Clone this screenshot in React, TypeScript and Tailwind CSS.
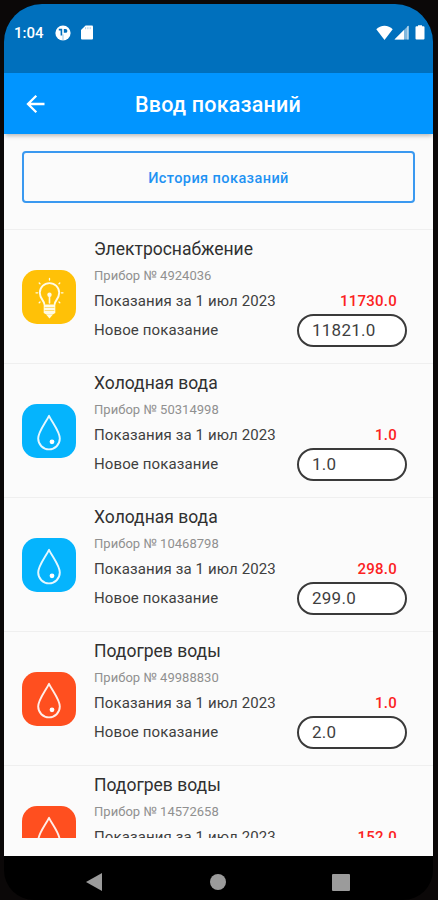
import { useState } from 'react';

type Meter = {
  id: number;
  kind: 'power' | 'cold' | 'hot';
  title: string;
  serial: string;
  previous: string;
  current: string;
};

const METERS: Meter[] = [
  { id: 1, kind: 'power', title: 'Электроснабжение', serial: '4924036', previous: '11730.0', current: '11821.0' },
  { id: 2, kind: 'cold', title: 'Холодная вода', serial: '50314998', previous: '1.0', current: '1.0' },
  { id: 3, kind: 'cold', title: 'Холодная вода', serial: '10468798', previous: '298.0', current: '299.0' },
  { id: 4, kind: 'hot', title: 'Подогрев воды', serial: '49988830', previous: '1.0', current: '2.0' },
  { id: 5, kind: 'hot', title: 'Подогрев воды', serial: '14572658', previous: '152.0', current: '' },
];

const TILE_COLORS = {
  power: 'bg-[#ffc107]',
  cold: 'bg-[#05b4fd]',
  hot: 'bg-[#ff4f1f]',
};

const BulbIcon = () => (
  <svg width="54" height="54" viewBox="0 0 54 54" fill="none" stroke="#fffbe6" strokeLinecap="round">
    <path
      d="M22.3 34c0-3.2-4.5-5.4-4.5-11.2a9.7 9.7 0 0 1 19.4 0c0 5.8-4.5 8-4.5 11.2"
      strokeWidth="1.9"
    />
    <path d="M27.5 33v-7" strokeWidth="1.6" />
    <circle cx="27.5" cy="24.7" r="2.2" fill="#fffbe6" stroke="none" />
    <path d="M21.7 34.5h11.6v8.5l-3 1.8h-5.6l-3-1.8z" fill="#fffbe6" stroke="none" />
    <path d="M23 37.5h9M23 40.5h9" stroke="#ffc107" strokeWidth="0.5" />
    <path d="M24.5 45h6l-3 3.5z" fill="#fffbe6" stroke="none" />
    <path
      d="M27.5 8.5v1.5M17.2 13l.8.8M37.8 13l-.8.8M14 22.8h1.6M39.4 22.8h1.6M17.2 32.800l.8-.8M37.8 32.800l-.8-.8"
      strokeWidth="1.3"
    />
  </svg>
);

const DropIcon = () => (
  <svg width="54" height="54" viewBox="0 0 54 54" fill="none">
    <path
      d="M27 11.8c-3.3 7-10.8 15.7-10.8 22.8a10.8 10.8 0 0 0 21.6 0c0-7.1-7.5-15.8-10.8-22.8z"
      stroke="#ffffff"
      strokeOpacity="0.9"
      strokeWidth="1.9"
      strokeLinejoin="round"
    />
    <circle cx="30" cy="37.800" r="2.4" fill="#ffffff" />
  </svg>
);

const StatusBar = () => (
  <div className="flex h-[69px] shrink-0 items-start justify-between bg-[#0070bd] pt-[19px] text-white">
    <div className="flex h-4 items-center pt-[3px] pl-[10px]">
      <span className="w-[41px] text-[15px] leading-4 font-medium">1:04</span>
      <svg width="16" height="16" viewBox="0 0 16 16">
        <circle cx="8" cy="8" r="7.6" fill="#ffffff" />
        <path d="M3.8 3.8h3.4v6.7H5.6V5.4H3.8z" fill="#0070bd" />
        <path d="M8.8 4h1.7a1.9 1.9 0 0 1 0 3.8H8.8z" fill="#0070bd" />
        <path d="M8 15.6V9.4" stroke="#0070bd" strokeOpacity="0.5" strokeWidth="0.8" />
      </svg>
      <svg className="ml-[10px]" width="12" height="15" viewBox="0 0 12 15">
        <path d="M4.6.5H11a1 1 0 0 1 1 1v12a1 1 0 0 1-1 1H1a1 1 0 0 1-1-1V5z" fill="#ffffff" />
        <path d="M4.6 2.2v2M6.9 2.2v2M9.2 2.2v2" stroke="#0070bd" strokeOpacity="0.5" strokeWidth="0.7" />
      </svg>
    </div>
    <div className="flex h-4 items-center pt-[3px] pr-[8px]">
      <svg width="17" height="15" viewBox="0 0 17 15">
        <path d="M8.5 15 .3 4.2C2.5 2 5.3.8 8.5.8S14.5 2 16.7 4.2z" fill="#ffffff" />
      </svg>
      <svg className="ml-[1px]" width="15" height="15" viewBox="0 0 15 15">
        <path d="M14.5.5v14H.5z" fill="#ffffff" fillOpacity="0.5" />
        <path d="M10 5v9.5H.5z" fill="#ffffff" />
        <path d="M14 1v13.5" stroke="#ffffff" strokeWidth="0.8" />
      </svg>
      <svg className="ml-[6px]" width="10" height="15" viewBox="0 0 10 15">
        <path d="M3 .3h4v1h1.5a1 1 0 0 1 1 1v11.2a1 1 0 0 1-1 1h-7a1 1 0 0 1-1-1V2.300a1 1 0 0 1 1-1H3z" fill="#ffffff" />
      </svg>
    </div>
  </div>
);

const App = () => {
  const [meters, setMeters] = useState<Meter[]>(METERS);

  const handleChange = (id: number, value: string) => {
    setMeters((prev) => prev.map((meter) => (meter.id === id ? { ...meter, current: value } : meter)));
  };

  return (
    <div className="h-[900px] w-[438px] overflow-hidden bg-[#0b0808] pt-1 pr-[5px] pl-1 font-['Roboto',sans-serif]">
      <div className="flex h-[896px] flex-col overflow-hidden rounded-t-[38px] rounded-b-[30px] bg-black">
        <StatusBar />
        <header className="z-10 flex h-[61px] shrink-0 items-center bg-[#0195ff] text-white shadow-[0_3px_4px_-1px_rgba(0,0,0,0.25)]">
          <button className="ml-[21px] w-[110px]" aria-label="Назад">
            <svg width="20" height="20" viewBox="0 0 20 20" fill="none" stroke="currentColor" strokeWidth="2.3">
              <path d="M19.5 10H3.500M11.300 1.800 3 10l8.300 8.200" />
            </svg>
          </button>
          <h1 className="pt-[3px] text-[21.5px] font-medium tracking-[0.2px]">Ввод показаний</h1>
        </header>
        <main className="h-[722px] shrink-0 bg-[#fbfbfb]">
          <div className="h-[704px] overflow-hidden">
            <div className="h-[95px] px-[18px] pt-[17px]">
              <button className="h-[52px] w-[393px] rounded-[4px] border-2 border-[#3a99f0] pt-[3px] text-[14.5px] font-medium tracking-[0.42px] text-[#1e92f3]">
                История показаний
              </button>
            </div>
            {meters.map((meter) => (
              <div
                key={meter.id}
                className="flex h-[134px] items-center border-t border-[#efefef] pr-[26px] pl-[18px] text-[#3f3f3f]"
              >
                <div className={`h-[54px] w-[54px] shrink-0 rounded-[15px] ${TILE_COLORS[meter.kind]}`}>
                  {meter.kind === 'power' ? <BulbIcon /> : <DropIcon />}
                </div>
                <div className="ml-[18px] h-[122px] flex-1 whitespace-nowrap">
                  <div className="text-[17.5px] leading-[26px] text-[#303030]">{meter.title}</div>
                  <div className="pt-px text-[13px] leading-[25px] tracking-[0.03px] text-[#909090]">
                    Прибор № {meter.serial}
                  </div>
                  <div className="flex justify-between text-[15px] leading-[26px] tracking-[0.12px]">
                    <span>Показания за 1 июл 2023</span>
                    <span className="pr-[10px] font-medium tracking-[0.25px] text-[#fb2222]">{meter.previous}</span>
                  </div>
                  <div className="flex items-center justify-between text-[15px] tracking-[0.12px]">
                    <span>Новое показание</span>
                    <input
                      value={meter.current}
                      onChange={(e) => handleChange(meter.id, e.target.value)}
                      className="h-[33px] w-[110px] rounded-full border-2 border-[#3a3a3a] bg-white pl-[13px] text-[17px] tracking-[0.25px] outline-none"
                    />
                  </div>
                </div>
              </div>
            ))}
          </div>
        </main>
        <nav className="flex h-[44px] shrink-0 items-center pt-[8px] pl-[81px]">
          <svg width="18" height="20" viewBox="0 0 18 20">
            <path d="M17 1v18L1 10z" fill="#9b9b9b" />
          </svg>
          <div className="ml-[107px] h-[16px] w-[16px] rounded-full bg-[#9b9b9b]" />
          <div className="ml-[106px] h-[17px] w-[18px] rounded-[1px] bg-[#9b9b9b]" />
        </nav>
      </div>
    </div>
  );
};

export default App;
